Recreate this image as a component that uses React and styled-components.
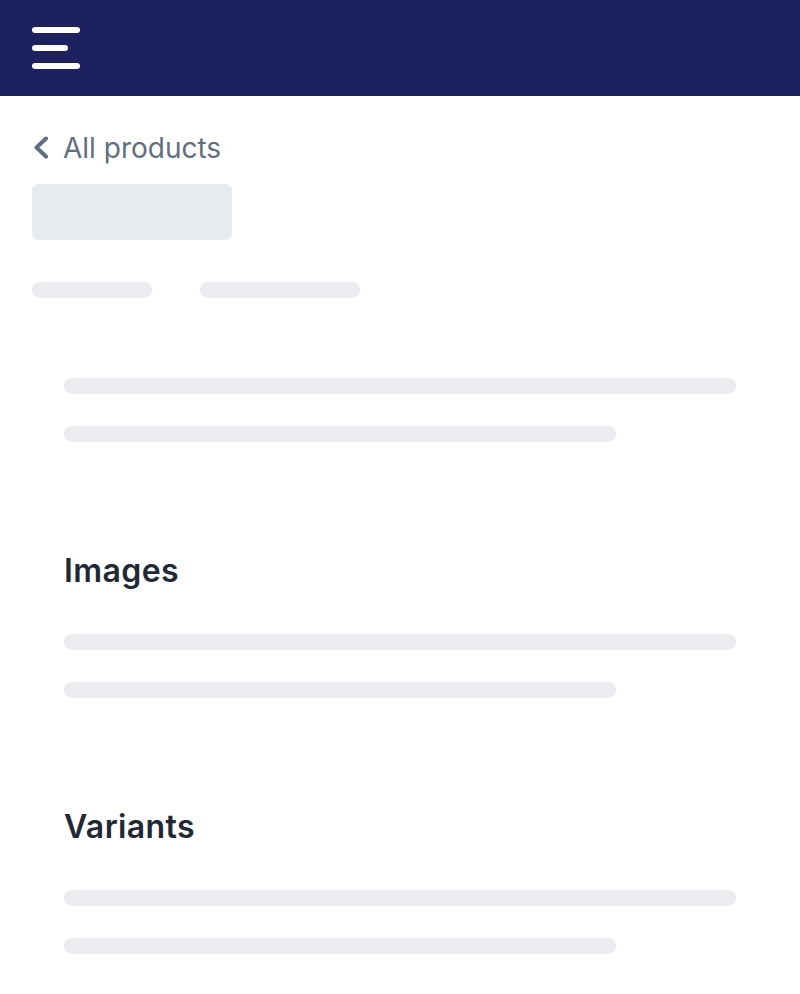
import React from 'react';
import styled, { createGlobalStyle } from 'styled-components';

const sections = [
  { id: 'details', title: null },
  { id: 'images', title: 'Images' },
  { id: 'variants', title: 'Variants' },
];

export default function App() {
  return (
    <>
      <GlobalStyle />
      <Header>
        <MenuButton aria-label="Menu">
          <MenuLine $width={48} />
          <MenuLine $width={36} />
          <MenuLine $width={48} />
        </MenuButton>
      </Header>
      <Main>
        <BackLink href="#">
          <svg width="16" height="24" viewBox="0 0 16 24" fill="none">
            <polyline
              points="13,2.5 3.5,11.5 13,20.5"
              stroke="currentColor"
              strokeWidth="4"
              strokeLinecap="round"
              strokeLinejoin="round"
            />
          </svg>
          All products
        </BackLink>
        <TitleSkeleton />
        <Tabs>
          <Pill $width={120} />
          <Pill $width={160} />
        </Tabs>
        <Sections>
          {sections.map(({ id, title }) => (
            <Section key={id}>
              {title && <SectionTitle>{title}</SectionTitle>}
              <Lines>
                <Line $width={672} />
                <Line $width={552} />
              </Lines>
            </Section>
          ))}
        </Sections>
      </Main>
    </>
  );
}

const GlobalStyle = createGlobalStyle`
  body {
    margin: 0;
    background: #fff;
    font-family: Inter, "Noto Sans", sans-serif;
  }
`;

const Header = styled.header`
  display: flex;
  align-items: center;
  height: 96px;
  padding: 0 32px;
  background: #1d2160;
`;

const MenuButton = styled.div`
  display: flex;
  flex-direction: column;
  gap: 12px;
`;

const MenuLine = styled.span`
  display: block;
  width: ${(p) => p.$width}px;
  height: 6px;
  border-radius: 3px;
  background: #fff;
`;

const Main = styled.main`
  padding: 32px 32px 0;
`;

const BackLink = styled.a`
  display: flex;
  align-items: center;
  gap: 14px;
  height: 40px;
  color: #5f6f80;
  font-size: 28px;
  line-height: 40px;
  text-decoration: none;

  svg {
    margin-left: 1px;
  }
`;

const TitleSkeleton = styled.div`
  width: 200px;
  height: 56px;
  margin-top: 16px;
  border-radius: 6px;
  background: #e9ecef;
`;

const Tabs = styled.div`
  display: flex;
  gap: 48px;
  margin-top: 42px;
`;

const Pill = styled.div`
  width: ${(p) => p.$width}px;
  height: 16px;
  border-radius: 8px;
  background: #eaecef;
`;

const Sections = styled.div`
  display: flex;
  flex-direction: column;
  gap: 109px;
  padding: 80px 32px 0;
`;

const Section = styled.section`
  display: flex;
  flex-direction: column;
`;

const SectionTitle = styled.h2`
  margin: 0 0 43px;
  color: #1f2935;
  font-size: 32px;
  font-weight: 600;
  line-height: 40px;
  letter-spacing: 0.4px;
`;

const Lines = styled.div`
  display: flex;
  flex-direction: column;
  gap: 32px;
`;

const Line = styled.div`
  width: ${(p) => p.$width}px;
  height: 16px;
  border-radius: 8px;
  background: #ebecf0;
`;
